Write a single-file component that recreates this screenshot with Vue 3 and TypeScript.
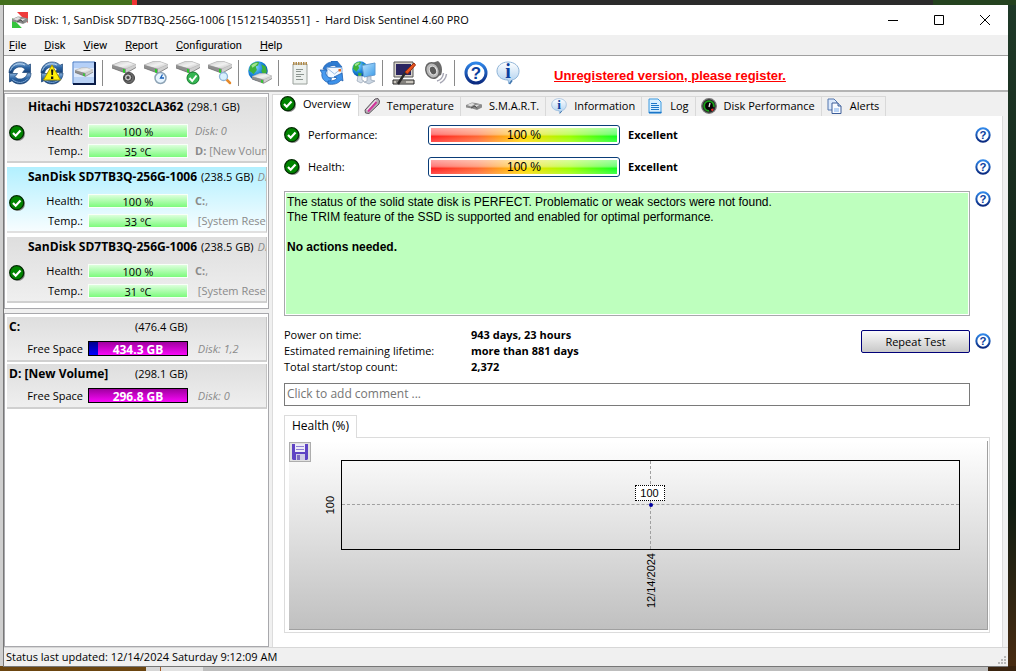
<script setup lang="ts">
import { ref } from 'vue'

interface Disk {
  name: string
  size: string
  trail: string
  temp: string
  healthStrong: string
  healthNote: string
  healthItalic: boolean
  tempStrong: string
  tempNote: string
}

interface Drive {
  name: string
  size: string
  free: string
  used: number
  disks: string
}

const menus = ['File', 'Disk', 'View', 'Report', 'Configuration', 'Help']

const toolGroups = [
  [
    { icon: 'sync', label: 'Refresh' },
    { icon: 'sync-warn', label: 'Refresh with alerts' },
    { icon: 'disk-panel', label: 'Disk panel' },
  ],
  [
    { icon: 'disk-sound', label: 'Acoustic settings' },
    { icon: 'disk-clock', label: 'Short test' },
    { icon: 'disk-check', label: 'Extended test' },
    { icon: 'disk-search', label: 'Surface test' },
  ],
  [{ icon: 'globe-disk', label: 'Online disk information' }],
  [
    { icon: 'notes', label: 'Report' },
    { icon: 'mail', label: 'Send report' },
    { icon: 'network', label: 'Network' },
  ],
  [
    { icon: 'config', label: 'Configuration' },
    { icon: 'speaker', label: 'Sound' },
  ],
  [
    { icon: 'help', label: 'Help' },
    { icon: 'info', label: 'About' },
  ],
]

const disks: Disk[] = [
  { name: 'Hitachi HDS721032CLA362', size: '(298.1 GB)', trail: '', temp: '35 °C', healthStrong: '', healthNote: 'Disk: 0', healthItalic: true, tempStrong: 'D:', tempNote: '[New Volume]' },
  { name: 'SanDisk SD7TB3Q-256G-1006', size: '(238.5 GB)', trail: 'Disk: 1', temp: '33 °C', healthStrong: 'C:', healthNote: ',', healthItalic: false, tempStrong: '', tempNote: '[System Reserved]' },
  { name: 'SanDisk SD7TB3Q-256G-1006', size: '(238.5 GB)', trail: 'Disk: 2', temp: '31 °C', healthStrong: 'C:', healthNote: ',', healthItalic: false, tempStrong: '', tempNote: '[System Reserved]' },
]

const drives: Drive[] = [
  { name: 'C:', size: '(476.4 GB)', free: '434.3 GB', used: 9, disks: 'Disk: 1,2' },
  { name: 'D: [New Volume]', size: '(298.1 GB)', free: '296.8 GB', used: 0, disks: 'Disk: 0' },
]

const tabs = [
  { icon: 'ok', label: 'Overview' },
  { icon: 'thermo', label: 'Temperature' },
  { icon: 'smart', label: 'S.M.A.R.T.' },
  { icon: 'info', label: 'Information' },
  { icon: 'log', label: 'Log' },
  { icon: 'gauge', label: 'Disk Performance' },
  { icon: 'pages', label: 'Alerts' },
]

const gauges = ['Performance:', 'Health:']

const stats = [
  ['Power on time:', '943 days, 23 hours'],
  ['Estimated remaining lifetime:', 'more than 881 days'],
  ['Total start/stop count:', '2,372'],
]

const selectedDisk = ref(1)
const activeTab = ref('Overview')
const comment = ref('')
</script>

<template>
  <div class="desktop">
    <svg class="sprite" aria-hidden="true">
      <defs>
        <linearGradient id="g-blue" x1="0" y1="0" x2="0" y2="1">
          <stop offset="0" stop-color="#8db4dc" /><stop offset=".5" stop-color="#2d66a5" /><stop offset="1" stop-color="#123c74" />
        </linearGradient>
        <linearGradient id="g-metal" x1="0" y1="0" x2="1" y2="1">
          <stop offset="0" stop-color="#c9c9c9" /><stop offset=".5" stop-color="#f1f1f1" /><stop offset="1" stop-color="#b5b5b5" />
        </linearGradient>
        <linearGradient id="g-ring" x1="0" y1="0" x2="0" y2="1">
          <stop offset="0" stop-color="#2f86e8" /><stop offset="1" stop-color="#0a2a80" />
        </linearGradient>
        <linearGradient id="g-bubble" x1="0" y1="0" x2="0" y2="1">
          <stop offset="0" stop-color="#ffffff" /><stop offset="1" stop-color="#a9cdee" />
        </linearGradient>
        <linearGradient id="g-screen" x1="0" y1="0" x2="1" y2="1">
          <stop offset="0" stop-color="#bfe6ff" /><stop offset="1" stop-color="#3a9be8" />
        </linearGradient>
        <radialGradient id="g-globe" cx=".35" cy=".3" r=".8">
          <stop offset="0" stop-color="#8fdcff" /><stop offset=".5" stop-color="#1a86dc" /><stop offset="1" stop-color="#07408f" />
        </radialGradient>
      </defs>
      <symbol id="drive" viewBox="0 0 24 14">
        <path d="M0 4 9 .5h7L24 3.500v3L14 12 0 7z" fill="#a5a5a5" />
        <path d="M0 4 9 .5h7l8 3L14 8z" fill="url(#g-metal)" stroke="#b0b0b0" stroke-width=".5" />
        <path d="M14 8v4.200l10-5.700v-3z" fill="#cfcfcf" />
        <path d="M0 4v3l14 5.200V8z" fill="#8f8f8f" />
        <path d="M0 7l14 5.200 10-5.700" fill="none" stroke="#6e6e6e" stroke-width=".7" />
        <path d="M11 7.800v3.500l2 .700V8.500z" fill="#24d024" />
      </symbol>
      <symbol id="i-sync" viewBox="0 0 24 24">
        <path d="M1 12C1 5.500 6 1 12 1c3.500 0 6 1.200 8 3.300L22.500 3v8.500h-8L17 8.300C15.500 6.500 14 6 12 6 8 6 5.500 8.500 4.500 12z" fill="url(#g-blue)" stroke="#1b4577" stroke-width=".7" />
        <path d="M23 12c0 6.500-5 11-11 11-3.500 0-6-1.200-8-3.300L1.500 21v-8.500h8L7 15.700C8.500 17.500 10 18 12 18c4 0 6.500-2.500 7.500-6z" fill="url(#g-blue)" stroke="#1b4577" stroke-width=".7" />
        <path d="M2.500 9.500C4 4 10 1 17 4" fill="none" stroke="#b9d4ee" />
        <path d="M4.500 18.500C9 22.500 16 22.500 20 17.500" fill="none" stroke="#7fabd8" />
      </symbol>
      <symbol id="i-sync-warn" viewBox="0 0 24 24">
        <use href="#i-sync" />
        <path d="M12 4 20.500 19h-17z" fill="#ffee08" stroke="#a89500" stroke-linejoin="round" />
        <path d="M11 8.500h2.400l-.500 5.500h-1.400zM11 15.500h2.300V18H11z" fill="#111" />
      </symbol>
      <symbol id="i-disk-panel" viewBox="0 0 24 24">
        <path d="M1 1h22v22H1z" fill="#dce9fc" stroke="#3c74c4" />
        <path d="M2 2h20v5H2z" fill="#b5d0f8" />
        <path d="M2 16h20v6H2z" fill="#b9d2f5" />
        <path d="M23 1v22H1" fill="none" stroke="#0b1d48" stroke-width="2" />
        <use href="#drive" x="3" y="6" width="18" height="11" />
      </symbol>
      <symbol id="i-disk-sound" viewBox="0 0 24 24">
        <use href="#drive" width="24" height="14" />
        <circle cx="17" cy="17" r="5.500" fill="#6b6b6b" stroke="#444" />
        <circle cx="16" cy="16.500" r="3.700" fill="#c0c0c0" stroke="#333" />
        <circle cx="16" cy="16.500" r="1.500" fill="#444" />
      </symbol>
      <symbol id="i-disk-clock" viewBox="0 0 24 24">
        <use href="#drive" width="24" height="14" />
        <circle cx="16.500" cy="17" r="5.500" fill="#e8f5ff" stroke="#8ea4b6" stroke-width="1.500" />
        <path d="M18.500 13.500 16.500 17H20" fill="none" stroke="#1a60b8" stroke-width="1.300" />
      </symbol>
      <symbol id="i-disk-check" viewBox="0 0 24 24">
        <use href="#drive" width="24" height="14" />
        <circle cx="17" cy="17" r="6" fill="#35b552" stroke="#137a2c" />
        <path d="m13.500 17 2.700 3 4.300-5.500" fill="none" stroke="#fff" stroke-width="2" />
      </symbol>
      <symbol id="i-disk-search" viewBox="0 0 24 24">
        <use href="#drive" width="24" height="14" />
        <path d="m18.500 18.500 3.500 3.500" stroke="#e58a2c" stroke-width="2.500" stroke-linecap="round" />
        <circle cx="15.500" cy="15.500" r="4" fill="#d8f0ff" stroke="#8fb4d6" stroke-width="1.300" />
      </symbol>
      <symbol id="globe" viewBox="0 0 18 18">
        <circle cx="9" cy="9" r="8.800" fill="url(#g-globe)" />
        <path d="M2 4Q5 .500 10 1l-1 3-2 1 1 3-3 4Q2 9 1 9zM12 3l4 2 1 5-3 3-2-4 1-2zM7 13l4 1-1 3H7z" fill="#3db23a" />
        <path d="M3 4Q6 1 9 2L7 4 4 6z" fill="#a2e58f" />
      </symbol>
      <symbol id="i-globe-disk" viewBox="0 0 24 24">
        <use href="#globe" width="20" height="20" />
        <use href="#drive" x="4" y="12" width="20" height="12" />
      </symbol>
      <symbol id="i-notes" viewBox="0 0 24 24">
        <path d="M5 3h14v20H5z" fill="#edf1ee" stroke="#9aa19c" />
        <path d="M5 2.500h14" stroke="#b08a48" stroke-width="3" stroke-dasharray="1.500 1" />
        <path d="M8 8.500h7M8 10.500h5M8 13.500h8M8 15.500h5M8 18.500h7" stroke="#8c958f" />
      </symbol>
      <symbol id="i-mail" viewBox="0 0 24 24">
        <path d="M3 8C4 4 8 1 12 1l-1-1h6l5 6-7 2 1-3c-4-1-7 0-9 4z" fill="#2f7bd0" stroke="#1556a8" stroke-width=".6" />
        <path d="M7 6.500h15v10H7z" fill="#f4f9ff" stroke="#7fa9da" />
        <path d="m7 7 7.500 6L22 7" fill="none" stroke="#9dbfe6" />
        <path d="M18.500 8h2.500v2.500h-2.500z" fill="#ea6a20" />
        <path d="M0 9h7L5.500 12c1 3 3 5 6 5.500L10 22C4 21 1 17 2 12z" fill="#4a9cf0" stroke="#1556a8" stroke-width=".7" />
        <path d="M8 20c5 0 8-1 9-3l-3-1 8-4 1 8-2-1c-3 4-8 5-13 4z" fill="#3d92ea" stroke="#1556a8" stroke-width=".7" />
      </symbol>
      <symbol id="i-network" viewBox="0 0 24 24">
        <use href="#globe" width="16" height="16" />
        <path d="M10 4.500 23 2v12l-11 2z" fill="url(#g-screen)" stroke="#5f9bd4" />
        <path d="m15 16 4-1v4l4 1-6 3-5-2 3-1z" fill="#c9d5e2" stroke="#8796a8" stroke-width=".6" />
        <path d="M6 15h4v4l2 1-3 2-4-2z" fill="#d9e1ea" stroke="#8796a8" stroke-width=".6" />
      </symbol>
      <symbol id="i-config" viewBox="0 0 24 24">
        <path d="M2 1h19v15H2z" fill="#d4d0c8" stroke="#555" />
        <path d="M4 3h15v11H4z" fill="#2a2560" />
        <path d="M1 19h21v4H1z" fill="#c9c5bd" stroke="#222" />
        <path d="M4 21h10" stroke="#444" />
        <path d="m6 23 7-11" stroke="#2a2a2a" stroke-width="2.400" />
        <path d="m13 11 9-9 1.500 2-8 9z" fill="#e85420" stroke="#9c2f0c" />
      </symbol>
      <symbol id="i-speaker" viewBox="0 0 24 24">
        <path d="M8 2 14 0c4 3 5 9 3 14l-7 3z" fill="#6a6a6a" />
        <ellipse cx="8.500" cy="9.500" rx="6.500" ry="8" transform="rotate(-25 8.500 9.500)" fill="#b9b9b9" stroke="#666" stroke-width="1.500" />
        <ellipse cx="9" cy="9.500" rx="3.500" ry="4.500" transform="rotate(-25 9 9.500)" fill="#5a5a5a" stroke="#eee" />
        <path d="M13 20c4-1 6-4 6.500-8M16 22c4-2 6-5 6.500-9" fill="none" stroke="#a7a7b4" stroke-width="1.500" />
      </symbol>
      <symbol id="i-help" viewBox="0 0 24 24">
        <circle cx="12" cy="12" r="10" fill="#fff" stroke="url(#g-ring)" stroke-width="3" />
        <text x="12" y="18" text-anchor="middle" font-family="Liberation Sans, sans-serif" font-size="17" font-weight="700" fill="#0b3f9e">?</text>
      </symbol>
      <symbol id="i-info" viewBox="0 0 24 24">
        <path d="M12 1c6.500 0 11 4 11 9s-3 8-7 9l-3 4-1-4C5 19 1 15 1 10s4.500-9 11-9z" fill="url(#g-bubble)" stroke="#8fb4d8" />
        <path d="M16 19.500 13.500 23" stroke="#3f74ad" stroke-width="1.500" />
        <text x="12" y="17" text-anchor="middle" font-family="Liberation Serif, serif" font-size="20" font-weight="700" fill="#0b3f9e">i</text>
      </symbol>
      <symbol id="i-ok" viewBox="0 0 16 16">
        <circle cx="8.800" cy="8.800" r="7.200" fill="#888" />
        <circle cx="7.700" cy="7.700" r="7" fill="#008400" stroke="#022c02" stroke-width="1.200" />
        <path d="m4 8 2.700 2.700L11.500 5.500" fill="none" stroke="#fff" stroke-width="2.200" />
      </symbol>
      <symbol id="i-thermo" viewBox="0 0 16 16">
        <path d="M1 12 11 1l3-.500 1.500 2.500L15 6 5 15.500 1.500 15z" fill="#b9b0b9" stroke="#5c555c" />
        <path d="m3 12.500 9-10" stroke="#f2eef2" stroke-width="1.500" />
        <path d="m4 13.500 8.500-9.500" stroke="#d0339a" stroke-width="2" />
      </symbol>
      <symbol id="i-smart" viewBox="0 0 16 16">
        <path d="M0 7 6 4.500l4 .500 6 1.500v3l-5 2.500-5-1.500-6-1z" fill="#8b8b8b" />
        <path d="M1 7 6 5l3 1-4 2.500zM9 7l5-.500-4 2.500z" fill="#dedede" />
        <path d="m5 10 4-2 2 2.500" fill="none" stroke="#4c4c4c" />
      </symbol>
      <symbol id="i-log" viewBox="0 0 16 16">
        <path d="M2 1h9l3 3v11H2z" fill="#d9efff" stroke="#3c9ae0" />
        <path d="M4 5.500h6M4 7.500h8M4 9.500h8M4 11.500h8" stroke="#1c76c8" />
        <path d="M2 14.500h12.500" stroke="#1c76c8" stroke-width="1.500" />
      </symbol>
      <symbol id="i-gauge" viewBox="0 0 16 16">
        <circle cx="8" cy="8" r="7.300" fill="#2a2a2a" stroke="#777" stroke-width="1.300" />
        <circle cx="8" cy="8" r="4.800" fill="#050505" stroke="#17a317" stroke-width="1.800" stroke-dasharray="23 8" transform="rotate(90 8 8)" />
        <path d="m8 9 1-4" stroke="#eee" stroke-width="1.300" />
        <path d="m10.500 11 1.500 1.500" stroke="#e22" stroke-width="2" />
      </symbol>
      <symbol id="i-pages" viewBox="0 0 16 16">
        <path d="M1 1h6l3 3v8H1z" fill="#dbe9fc" stroke="#5576ad" />
        <path d="M5 5h6l3 3v7.500H5z" fill="#f8fbff" stroke="#3c5c98" />
        <path d="M11 5v3h3" fill="#bcd2f0" stroke="#3c5c98" />
        <path d="M7 10h5v4H7z" fill="#b9d3f5" />
      </symbol>
      <symbol id="i-save" viewBox="0 0 16 16">
        <path d="M0 0h16v15l-1 1H1l-1-1z" fill="#5e43c4" />
        <path d="M3 0h10v8H3z" fill="#eceaf8" />
        <path d="M4 2.500h8M4 5.500h8" stroke="#8e7fd2" />
        <path d="M4 10h9v6H4z" fill="#cfcbe6" />
        <path d="M5 11h3v5H5z" fill="#7a68c0" />
      </symbol>
      <symbol id="i-app" viewBox="0 0 16 16">
        <path d="M5 0h11v11z" fill="#ee3b3b" />
        <path d="M0 6v10h10z" fill="#35c43c" />
        <path d="M4 0 0 5l10 11 6-4z" fill="#fff" opacity=".6" />
        <use href="#i-smart" width="16" height="16" />
      </symbol>
    </svg>

    <main class="window">
      <header class="titlebar">
        <svg class="ic16" aria-hidden="true"><use href="#i-app" /></svg>
        <h1>Disk: 1, SanDisk SD7TB3Q-256G-1006 [151215403551] &nbsp;-&nbsp; Hard Disk Sentinel 4.60 PRO</h1>
        <div class="winbtns">
          <button type="button" aria-label="Minimize"><svg viewBox="0 0 10 10"><path d="M0 5.500h10" /></svg></button>
          <button type="button" aria-label="Maximize"><svg viewBox="0 0 10 10"><path d="M.500.500h9v9h-9z" /></svg></button>
          <button type="button" aria-label="Close"><svg viewBox="0 0 10 10"><path d="m0 0 10 10M10 0 0 10" /></svg></button>
        </div>
      </header>

      <nav class="menubar">
        <button v-for="m in menus" :key="m" type="button"><u>{{ m[0] }}</u>{{ m.slice(1) }}</button>
      </nav>

      <div class="toolbar">
        <div v-for="(group, i) in toolGroups" :key="i" class="group">
          <button v-for="t in group" :key="t.icon" type="button" :aria-label="t.label">
            <svg class="ic24" aria-hidden="true"><use :href="'#i-' + t.icon" /></svg>
          </button>
        </div>
        <a class="register" href="#register">Unregistered version, please register.</a>
      </div>

      <div class="body">
        <aside class="side">
          <div class="pane disks">
            <section
              v-for="(d, i) in disks"
              :key="i"
              class="item"
              :class="{ selected: i === selectedDisk }"
              @click="selectedDisk = i"
            >
              <div class="disk-title"><b>{{ d.name }}</b><span>{{ d.size }}</span><i>{{ d.trail }}</i></div>
              <div class="disk-rows">
                <svg class="ic16 state" aria-hidden="true"><use href="#i-ok" /></svg>
                <span class="label">Health:</span>
                <span class="bar">100 %</span>
                <span class="note"><i v-if="d.healthItalic">{{ d.healthNote }}</i><template v-else><b>{{ d.healthStrong }}</b>{{ d.healthNote }}</template></span>
                <span class="label">Temp.:</span>
                <span class="bar">{{ d.temp }}</span>
                <span class="note"><b v-if="d.tempStrong">{{ d.tempStrong }}&nbsp;</b><template v-else>&nbsp;</template>{{ d.tempNote }}</span>
              </div>
            </section>
          </div>
          <div class="pane drives">
            <section v-for="d in drives" :key="d.name" class="item">
              <div class="drive-title"><b>{{ d.name }}</b><span>{{ d.size }}</span></div>
              <div class="drive-row">
                <span class="label">Free Space</span>
                <span class="space"><span class="used" :style="{ width: d.used + '%' }"></span><b>{{ d.free }}</b></span>
                <span class="note"><i>&nbsp;{{ d.disks }}</i></span>
              </div>
            </section>
          </div>
        </aside>

        <div class="main">
          <div class="tabs" role="tablist">
            <button
              v-for="t in tabs"
              :key="t.label"
              type="button"
              role="tab"
              :aria-selected="activeTab === t.label"
              :class="{ active: activeTab === t.label }"
              @click="activeTab = t.label"
            >
              <svg class="ic16" aria-hidden="true"><use :href="'#i-' + t.icon" /></svg>{{ t.label }}
            </button>
          </div>

          <div class="page">
            <div v-for="g in gauges" :key="g" class="gauge-row">
              <svg class="ic16" aria-hidden="true"><use href="#i-ok" /></svg>
              <span class="gauge-label">{{ g }}</span>
              <span class="gauge"><span>100 %</span></span>
              <b>Excellent</b>
              <button class="helpbtn" type="button" aria-label="Help"><svg class="ic16" aria-hidden="true"><use href="#i-help" /></svg></button>
            </div>

            <div class="with-help status-row">
              <div class="status-text">
                <p>The status of the solid state disk is PERFECT. Problematic or weak sectors were not found.<br />The TRIM feature of the SSD is supported and enabled for optimal performance.</p>
                <p><b>No actions needed.</b></p>
              </div>
              <button class="helpbtn" type="button" aria-label="Help"><svg class="ic16" aria-hidden="true"><use href="#i-help" /></svg></button>
            </div>

            <div class="with-help stats-row">
              <dl>
                <template v-for="s in stats" :key="s[0]">
                  <dt>{{ s[0] }}</dt>
                  <dd>{{ s[1] }}</dd>
                </template>
              </dl>
              <button class="repeat" type="button">Repeat Test</button>
              <button class="helpbtn" type="button" aria-label="Help"><svg class="ic16" aria-hidden="true"><use href="#i-help" /></svg></button>
            </div>

            <input v-model="comment" class="comment" type="text" placeholder="Click to add comment ..." aria-label="Comment" />

            <div class="chart-tabs" role="tablist">
              <button type="button" role="tab" aria-selected="true">Health (%)</button>
            </div>
            <div class="chart-frame">
              <div class="chart">
                <button class="save" type="button" aria-label="Save chart"><svg class="ic16" aria-hidden="true"><use href="#i-save" /></svg></button>
                <span class="ylabel">100</span>
                <div class="plot">
                  <span class="hline"></span>
                  <span class="vline"></span>
                  <span class="point"></span>
                  <span class="value">100</span>
                </div>
                <span class="xlabel">12/14/2024</span>
              </div>
            </div>
          </div>
        </div>
      </div>

      <footer class="statusbar">
        <span>Status last updated: 12/14/2024 Saturday 9:12:09 AM</span>
        <svg class="grip" viewBox="0 0 8 8" aria-hidden="true">
          <path d="M6 0h2v2H6zM3 3h2v2H3zM6 3h2v2H6zM0 6h2v2H0zM3 6h2v2H3zM6 6h2v2H6z" />
        </svg>
      </footer>
    </main>
  </div>
</template>

<style>
body {
  margin: 0;
}
</style>

<style scoped>
* {
  box-sizing: border-box;
}
.desktop {
  display: flex;
  min-height: 100vh;
  padding: 5px 8px 4px 3px;
  overflow: hidden;
  font: 11px/16px 'Open Sans', 'Noto Sans', sans-serif;
  color: #000;
  background:
    linear-gradient(90deg, #436f1c 132px, #e33 132px 137px, #2b2b2b 137px calc(100% - 83px), #24421f 0) top / 100% 5px no-repeat,
    linear-gradient(90deg, #6b4510 146px, #d6d6d6 146px 160px, #a85a20 160px 161px, #e2e2e2 161px 203px, #bdbdbd 203px calc(100% - 28px), #3a2410 0) bottom / 100% 5px no-repeat,
    linear-gradient(#1f3a28, #16261a 40%, #0f1c12 75%, #4a2c12) right / 8px 100% no-repeat,
    #cfcfcf;
}
.sprite {
  position: absolute;
  width: 0;
  height: 0;
}
button {
  margin: 0;
  padding: 0;
  border: 0;
  background: none;
  font: inherit;
  color: inherit;
}
.ic16 {
  width: 16px;
  height: 16px;
  flex: none;
}
.ic24 {
  width: 24px;
  height: 24px;
  display: block;
}
.window {
  flex: 1;
  min-width: 0;
  display: flex;
  flex-direction: column;
  background: #f0f0f0;
  border-left: 1px solid #777;
  border-bottom: 1px solid #777;
}
.titlebar {
  display: flex;
  align-items: center;
  height: 30px;
  padding-left: 8px;
  background: #fff;
}
.titlebar h1 {
  flex: 1;
  margin: 0 0 0 6px;
  font-size: 11px;
  font-weight: 400;
  white-space: nowrap;
}
.winbtns {
  display: flex;
}
.winbtns button {
  width: 46px;
  height: 29px;
  display: grid;
  place-items: center;
}
.winbtns svg {
  width: 10px;
  height: 10px;
  fill: none;
  stroke: #000;
}
.menubar {
  display: flex;
  gap: 18px;
  height: 20px;
  padding: 2px 0 0 5px;
  font-family: Roboto, 'Open Sans', sans-serif;
}
.toolbar {
  display: flex;
  align-items: center;
  height: 37px;
  background: #fff;
  border-top: 1px solid #a0a0a0;
  border-bottom: 2px solid #b4b4b4;
}
.group {
  display: flex;
}
.group + .group::before {
  content: '';
  width: 1px;
  margin: 2px 5px 2px 2px;
  background: #8a8a8a;
}
.group button {
  width: 32px;
  height: 30px;
  display: grid;
  place-items: center;
}
.register {
  margin-left: 30px;
  padding-top: 6px;
  font: bold 13px/18px 'Liberation Sans', Arial, sans-serif;
  color: #f00;
}
.body {
  flex: 1;
  display: flex;
  gap: 3px;
  padding-right: 5px;
}
.side {
  width: 265px;
  flex: none;
  display: flex;
  flex-direction: column;
  gap: 4px;
  padding-top: 1px;
}
.side b {
  font-size: 12px;
}
.side .note b {
  font-size: 11px;
}
.pane {
  background: #fff;
  border: 1px solid #a8a8ac;
  padding: 3px 1px 5px 2px;
}
.drives {
  flex: 1;
}
.item {
  margin-bottom: 4px;
  overflow: hidden;
  background: linear-gradient(#dedede, #efefef);
  border-right: 1px solid #c4c4c4;
  border-bottom: 2px solid #d0d0d0;
}
.disks .item:last-child {
  margin-bottom: 0;
}
.item.selected {
  background: linear-gradient(#b2f0ff, #f7fdff);
  border-bottom-color: #e0e0e0;
}
.item i,
.note {
  color: #8a8a8a;
}
.disk-title {
  display: flex;
  gap: 4px;
  height: 20px;
  line-height: 20px;
  margin-bottom: 4px;
  padding-left: 21px;
  white-space: nowrap;
}
.disk-rows {
  display: grid;
  grid-template-columns: 18px 58px 105px 1fr;
  grid-auto-rows: 20px;
  align-items: center;
}
.state {
  grid-row: 1 / 3;
  margin: 0 0 16px 2px;
}
.label {
  text-align: right;
  white-space: nowrap;
}
.bar,
.space {
  margin-left: 5px;
}
.bar {
  height: 14px;
  line-height: 14px;
  text-align: center;
  border: 1px solid #f8fff8;
  background: linear-gradient(#dcffdc, #7dfb7d);
}
.note {
  margin-left: 7px;
  white-space: nowrap;
  overflow: hidden;
}
.drives .item {
  margin-bottom: 2px;
}
.drive-title {
  display: flex;
  height: 20px;
  line-height: 20px;
  padding-left: 2px;
}
.drive-title b {
  width: 126px;
}
.drive-row {
  display: grid;
  grid-template-columns: 76px 105px 1fr;
  align-items: center;
  height: 23px;
}
.space {
  position: relative;
  height: 15px;
  line-height: 15px;
  border: 1px solid #000;
  background: linear-gradient(#a000a0, #f808f8);
  color: #fff;
  text-align: center;
}
.space b {
  position: relative;
}
.used {
  position: absolute;
  inset: 0 auto 0 0;
  background: linear-gradient(#00008c, #0000ff);
}
.main {
  flex: 1;
  min-width: 0;
  display: flex;
  flex-direction: column;
  padding-top: 2px;
}
.tabs {
  display: flex;
  align-items: flex-end;
  height: 22px;
}
.tabs button {
  display: flex;
  align-items: center;
  gap: 7px;
  height: 20px;
  padding: 0 6px 1px 5px;
  white-space: nowrap;
  border: 1px solid #d9d9d9;
  border-width: 1px 1px 0 0;
}
.tabs button.active {
  height: 22px;
  padding: 0 7px 4px 7px;
  border-left-width: 1px;
  background: #fff;
}
.page {
  flex: 1;
  padding: 3px 11px 14px 11px;
  background: #fff;
  border-left: 1px solid #dcdcdc;
  border-right: 1px solid #dcdcdc;
}
.gauge-row {
  display: flex;
  align-items: center;
  height: 32px;
}
.gauge-label {
  width: 120px;
  margin-left: 8px;
}
.gauge {
  width: 192px;
  height: 20px;
  padding: 2px;
  margin-right: 8px;
  border: 1px solid #0a3d78;
  border-radius: 3px;
}
.gauge span {
  display: block;
  height: 14px;
  font: 12px/14px 'Liberation Sans', Arial, sans-serif;
  text-align: center;
  background:
    linear-gradient(rgba(255, 255, 255, 0.6), rgba(255, 255, 255, 0.4) 45%, rgba(255, 255, 255, 0) 60%, rgba(255, 255, 255, 0.2)),
    linear-gradient(90deg, #f22, #f63 25%, #ffd800 50%, #9f0 75%, #1f2);
}
.helpbtn {
  width: 16px;
  height: 16px;
  margin-left: auto;
}
.helpbtn svg {
  display: block;
}
.with-help {
  display: flex;
  align-items: flex-start;
}
.with-help .helpbtn {
  margin-left: 5px;
}
.status-row {
  margin-top: 8px;
}
.status-text {
  flex: 1;
  min-height: 125px;
  padding: 3px 1px;
  background: #beffbe;
  border: 1px solid #a8a8ac;
  box-shadow: inset 0 0 0 1px #fff;
  font: 12px/15px 'Liberation Sans', Arial, sans-serif;
}
.status-text p {
  margin: 0 0 15px 1px;
}
.stats-row {
  margin-top: 11px;
}
dl {
  flex: 1;
  display: grid;
  grid-template-columns: 187px 1fr;
  margin: 0;
}
dd {
  margin: 0;
  font-weight: 700;
}
.repeat {
  width: 109px;
  height: 23px;
  margin-top: 3px;
  border: 1px solid #000078;
  border-radius: 2px;
  background: linear-gradient(#fafafa, #c8c8c8);
}
.stats-row .helpbtn {
  margin-top: 6px;
}
.comment {
  display: block;
  width: calc(100% - 21px);
  height: 23px;
  margin: 8px 0 9px;
  padding: 0 2px 2px;
  border: 1px solid #7a7a7a;
  font: inherit;
  font-size: 12px;
}
.comment::placeholder {
  color: #757575;
  opacity: 1;
}
.chart-tabs {
  display: flex;
}
.chart-tabs button {
  position: relative;
  z-index: 1;
  height: 23px;
  margin-bottom: -1px;
  padding: 0 7px 3px;
  font-size: 12px;
  background: #fff;
  border: 1px solid #dcdcdc;
  border-bottom: 0;
}
.chart-frame {
  margin-right: 1px;
  padding: 3px 1px 2px 4px;
  border: 1px solid #dcdcdc;
}
.chart {
  display: grid;
  grid-template-columns: 34px 18px 1fr;
  grid-template-rows: 90px 1fr;
  height: 189px;
  padding: 19px 27px 0 0;
  background: linear-gradient(#fff, #c0c0c0);
  border-right: 1px solid #a0a0a0;
  border-bottom: 1px solid #a0a0a0;
  font: 11px/14px 'Liberation Sans', Arial, sans-serif;
}
.save {
  width: 22px;
  height: 20px;
  margin-top: -18px;
  display: grid;
  place-items: center;
  background: #e1e1e1;
  border: 1px solid #adadad;
}
.plot {
  position: relative;
  border: 1px solid #000;
}
.ylabel,
.xlabel {
  writing-mode: vertical-rl;
  transform: rotate(180deg);
}
.ylabel {
  place-self: center start;
}
.xlabel {
  grid-column: 3;
  place-self: start center;
  margin-top: 3px;
}
.hline {
  position: absolute;
  top: calc(50% - 1px);
  left: 0;
  right: 0;
  border-top: 1px dashed #a0a0a0;
}
.vline {
  position: absolute;
  left: calc(50% - 1px);
  top: 0;
  bottom: 0;
  border-left: 1px dashed #a0a0a0;
}
.point {
  position: absolute;
  left: calc(50% - 2px);
  top: calc(50% - 2px);
  width: 4px;
  height: 4px;
  border-radius: 2px;
  background: #0000a0;
}
.value {
  position: absolute;
  left: calc(50% - 16px);
  bottom: calc(50% + 4px);
  width: 30px;
  height: 16px;
  text-align: center;
  background: #fff;
  border: 1px dotted #000;
}
.statusbar {
  display: flex;
  align-items: center;
  justify-content: space-between;
  height: 19px;
  padding: 0 2px;
  border-top: 1px solid #d7d7d7;
  white-space: nowrap;
}
.grip {
  width: 8px;
  height: 8px;
  align-self: flex-end;
  margin-bottom: 2px;
  fill: #b8b8b8;
}
</style>
